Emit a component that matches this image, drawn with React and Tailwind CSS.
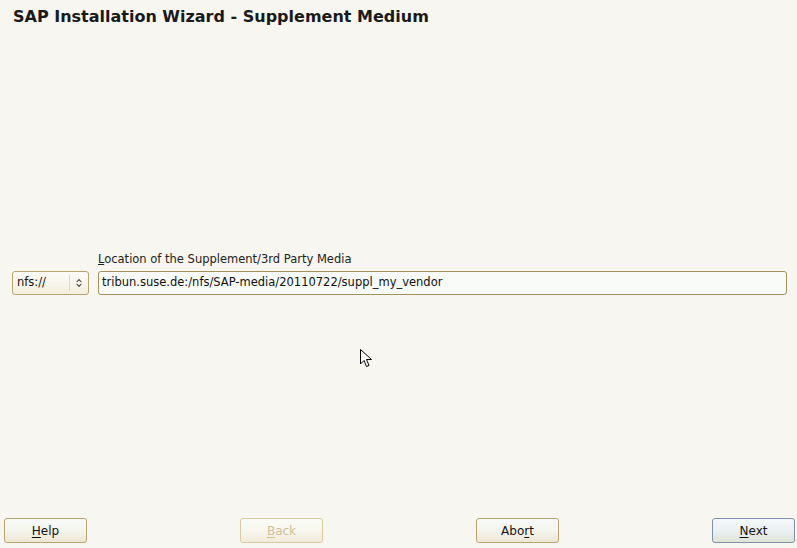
import { ChevronsUpDown } from 'lucide-react';

function WizardButton({ label, hotkey, disabled, primary }) {
  // underline the mnemonic letter, like the Qt/GTK dialogs do
  const idx = label.indexOf(hotkey);
  const before = label.slice(0, idx);
  const after = label.slice(idx + 1);

  const frame = primary
    ? 'border-[#7f92aa] bg-gradient-to-b from-[#f4f8fa] via-[#eaf1f3] to-[#dfe3d6]'
    : disabled
      ? 'border-[#d8c9a0] bg-gradient-to-b from-[#fbfcf8] via-[#f8f6ee] to-[#f1ebdb]'
      : 'border-[#b8a373] bg-gradient-to-b from-[#f6faf7] via-[#f5f5ee] to-[#ede6d3]';

  return (
    <button
      className={`w-[83px] h-[25px] rounded-[3px] border text-[12px] leading-none flex items-center justify-center ${frame} ${
        disabled ? 'text-[#cfbf97]' : 'text-[#111]'
      }`}
    >
      {before}
      <span className="underline underline-offset-2">{label[idx]}</span>
      {after}
    </button>
  );
}

export default function App() {
  return (
    <div className="relative w-[797px] h-[548px] bg-[#f7f6f0] flex flex-col font-['DejaVu_Sans',sans-serif] text-[#111] overflow-hidden">
      {/* Header */}
      <h1 className="px-[13px] pt-[6px] text-[16px] font-bold leading-[22px] text-[#1a1a1a]">
        SAP Installation Wizard - Supplement Medium
      </h1>

      {/* Content */}
      <div className="flex-1 flex flex-col justify-center pl-[12px] pr-[10px]">
        <div className="flex items-end gap-[9px]">
          <div className="w-[77px] h-[24px] rounded-[3px] border border-[#b8a373] bg-gradient-to-b from-[#fbfbf6] to-[#f4efe0] flex items-center">
            <span className="flex-1 pl-[4px] text-[11.5px]">nfs://</span>
            <span className="w-px h-[16px] bg-[#e3d9bd]" />
            <span className="w-[18px] flex items-center justify-center">
              <ChevronsUpDown className="w-[10px] h-[10px] text-[#333]" strokeWidth={2.5} />
            </span>
          </div>
          <div className="flex-1 flex flex-col">
            <label className="text-[11.5px] leading-[14px] mb-[5px] text-[#222]">
              <span className="underline">L</span>ocation of the Supplement/3rd Party Media
            </label>
            <div className="h-[24px] rounded-[3px] border border-[#a58f5c] bg-[#f8fbf8] flex items-center px-[3px] text-[11.5px]">
              tribun.suse.de:/nfs/SAP-media/20110722/suppl_my_vendor
            </div>
          </div>
        </div>
      </div>

      {/* Footer buttons */}
      <div className="flex justify-between items-center pl-[4px] pr-[2px] pb-[5px]">
        <WizardButton label="Help" hotkey="H" />
        <WizardButton label="Back" hotkey="B" disabled />
        <WizardButton label="Abort" hotkey="r" />
        <WizardButton label="Next" hotkey="N" primary />
      </div>

      {/* mouse pointer left in the screenshot */}
      <svg className="absolute left-[360px] top-[349px]" width="13" height="20" viewBox="0 0 13 20">
        <path d="M0.5 0.5 L0.5 15 L4 11.5 L6.5 17.5 L9 16.5 L6.5 10.5 L11.5 10.5 Z" fill="#fff" stroke="#000" strokeWidth="1" />
      </svg>
    </div>
  );
}
